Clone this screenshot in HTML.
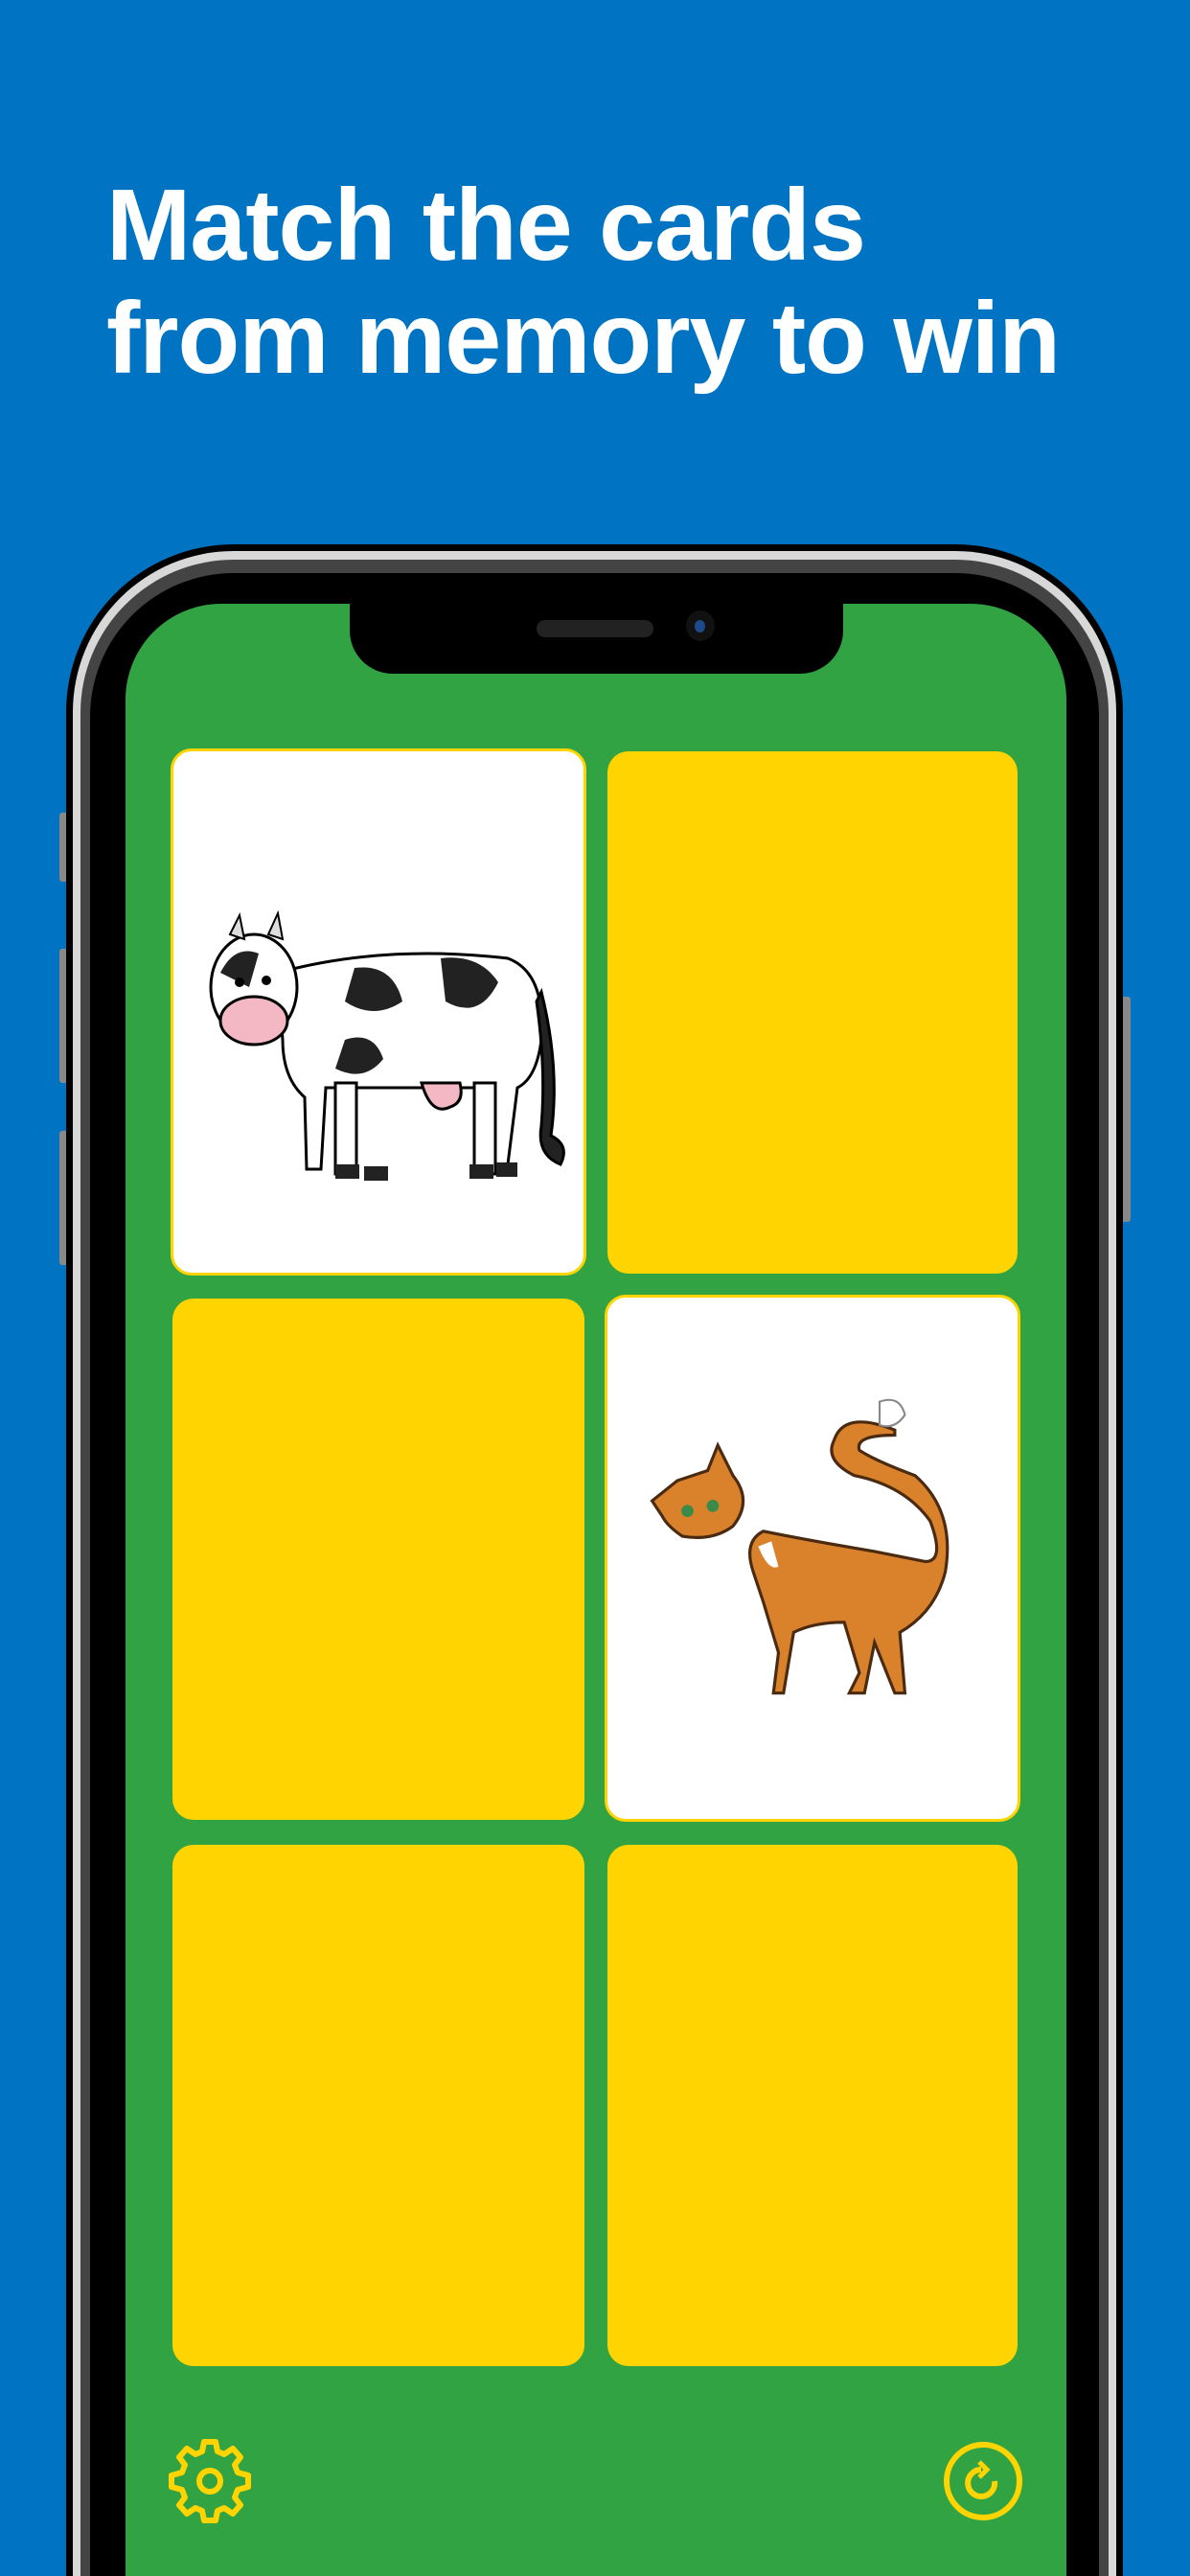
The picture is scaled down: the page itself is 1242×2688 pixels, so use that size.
<!DOCTYPE html>
<html><head><meta charset="utf-8"><style>
html,body{margin:0;padding:0;width:1242px;height:2688px;overflow:hidden}
#wrap{width:1242px;height:2688px;background:#0074c2;position:relative;overflow:hidden;font-family:"Liberation Sans",sans-serif}
.title{position:absolute;left:111px;top:176px;color:#fff;font-weight:bold;font-size:106px;line-height:118px;letter-spacing:-1px}
.abs{position:absolute}
.card{position:absolute;border-radius:22px;background:#ffd400}
.white{background:#fff;border:3px solid #ffd400;box-sizing:border-box}
</style></head><body><div id="wrap">
<div class="title">Match the cards<br>from memory to win</div>
<div class="abs" style="left:62px;top:848px;width:10px;height:72px;background:#888;border-radius:3px"></div>
<div class="abs" style="left:62px;top:990px;width:10px;height:140px;background:#888;border-radius:3px"></div>
<div class="abs" style="left:62px;top:1180px;width:10px;height:140px;background:#888;border-radius:3px"></div>
<div class="abs" style="left:1170px;top:1040px;width:10px;height:235px;background:#888;border-radius:3px"></div>
<div class="abs" style="left:69px;top:568px;width:1103px;height:2120px;background:#000;border-radius:175px 175px 0 0"></div>
<div class="abs" style="left:76px;top:575px;width:1089px;height:2113px;background:#d8d8d8;border-radius:168px 168px 0 0"></div>
<div class="abs" style="left:84px;top:584px;width:1073px;height:2104px;background:#444;border-radius:160px 160px 0 0"></div>
<div class="abs" style="left:94px;top:598px;width:1053px;height:2090px;background:#000;border-radius:150px 150px 0 0"></div>
<div class="abs" style="left:131px;top:630px;width:982px;height:2058px;background:#32a343;border-radius:100px 100px 0 0"></div>
<div class="abs" style="left:365px;top:620px;width:515px;height:83px;background:#000;border-radius:0 0 45px 45px"></div>
<div class="abs" style="left:560px;top:647px;width:122px;height:18px;background:#222;border-radius:9px"></div>
<div class="abs" style="left:716px;top:637px;width:30px;height:32px;background:#111;border-radius:50%"></div>
<div class="abs" style="left:725px;top:647px;width:11px;height:13px;background:#1d4a8a;border-radius:50%"></div>
<div class="card white" style="left:178px;top:781px;width:434px;height:550px"></div>
<div class="card" style="left:634px;top:784px;width:428px;height:545px"></div>
<div class="card" style="left:180px;top:1355px;width:430px;height:544px"></div>
<div class="card white" style="left:631px;top:1351px;width:434px;height:550px"></div>
<div class="card" style="left:180px;top:1925px;width:430px;height:544px"></div>
<div class="card" style="left:634px;top:1925px;width:428px;height:544px"></div>
<svg class="abs" style="left:200px;top:935px" width="400" height="315" viewBox="0 0 400 315">
<g stroke="#000" stroke-width="3">
<path d="M90 80 Q200 50 330 65 Q370 80 365 150 Q360 190 340 200 L330 280 L315 280 L310 200 L140 200 L135 285 L120 285 L118 210 Q95 190 95 150 Z" fill="#fff"/>
<rect x="150" y="195" width="22" height="95" fill="#fff"/>
<rect x="295" y="195" width="22" height="95" fill="#fff"/>
<path d="M365 100 Q385 180 375 250 Q395 260 385 280 Q360 270 365 240 Q370 180 360 110Z" fill="#222"/>
<path d="M240 195 Q250 230 270 220 Q285 215 280 195Z" fill="#f4b8c4"/>
<ellipse cx="65" cy="95" rx="45" ry="55" fill="#fff"/>
<ellipse cx="65" cy="130" rx="35" ry="25" fill="#f4b8c4"/>
</g>
<path d="M170 75 Q210 70 220 110 Q190 130 160 110Z" fill="#222"/>
<path d="M260 65 Q300 60 320 90 Q300 130 265 110Z" fill="#222"/>
<path d="M160 150 Q190 140 200 170 Q180 195 150 180Z" fill="#222"/>
<path d="M30 80 Q45 50 70 60 L60 95Z" fill="#222"/>
<path d="M40 40 L50 20 L55 45Z M80 40 L90 18 L95 45Z" fill="#ddd" stroke="#000" stroke-width="2"/>
<circle cx="50" cy="90" r="5"/><circle cx="78" cy="88" r="5"/>
<rect x="150" y="280" width="25" height="15" fill="#222"/><rect x="180" y="282" width="25" height="15" fill="#222"/>
<rect x="290" y="280" width="25" height="15" fill="#222"/><rect x="318" y="278" width="22" height="15" fill="#222"/>
</svg>
<svg class="abs" style="left:670px;top:1450px" width="380" height="380" viewBox="0 0 360 360">
<g stroke="#4a2a10" stroke-width="3" fill="#d9822b">
<path d="M250 40 Q200 20 190 50 Q180 70 210 85 Q260 95 285 130 Q300 170 280 170 L230 160 Q170 150 120 140 Q100 150 110 180 L120 210 L135 260 L130 300 L140 300 L150 240 Q170 230 200 230 L215 280 L205 300 L220 300 L230 250 L250 300 L260 300 L255 240 Q290 220 300 180 Q310 120 270 85 Q230 70 215 60 Q210 45 250 45Z"/>
<path d="M10 110 L35 90 L65 80 L75 55 L90 85 Q110 110 90 135 Q70 150 40 145 Q25 135 20 125Z"/>
</g>
<path d="M235 12 Q255 5 260 25 Q250 40 235 35Z" fill="#fff" stroke="#888" stroke-width="2"/>
<circle cx="45" cy="120" r="6" fill="#3a8a4a"/><circle cx="70" cy="115" r="6" fill="#3a8a4a"/>
<path d="M115 155 Q125 180 135 175 L128 150Z" fill="#fff"/>
</svg>
<svg class="abs" style="left:172px;top:2542px" width="94" height="94" viewBox="-47 -47 94 94">
<path fill="none" stroke="#ffd400" stroke-width="6" stroke-linejoin="round" d="M-6 -41 L6 -41 L8 -31 L15 -28 L24 -34 L32 -25 L26 -17 L29 -9 L40 -6 L40 6 L29 9 L26 17 L32 25 L24 34 L15 28 L8 31 L6 41 L-6 41 L-8 31 L-15 28 L-24 34 L-32 25 L-26 17 L-29 9 L-40 6 L-40 -6 L-29 -9 L-26 -17 L-32 -25 L-24 -34 L-15 -28 L-8 -31 Z"/>
<circle r="11" fill="none" stroke="#ffd400" stroke-width="6"/>
</svg>
<svg class="abs" style="left:982px;top:2545px" width="88" height="88" viewBox="-44 -44 88 88">
<circle r="38" fill="none" stroke="#ffd400" stroke-width="6"/>
<path d="M-2 -12 A14 14 0 1 0 12 0" fill="none" stroke="#ffd400" stroke-width="6"/>
<path d="M-4 -20 L4 -12 L-4 -4" fill="none" stroke="#ffd400" stroke-width="5"/>
</svg>
</div></body></html>
